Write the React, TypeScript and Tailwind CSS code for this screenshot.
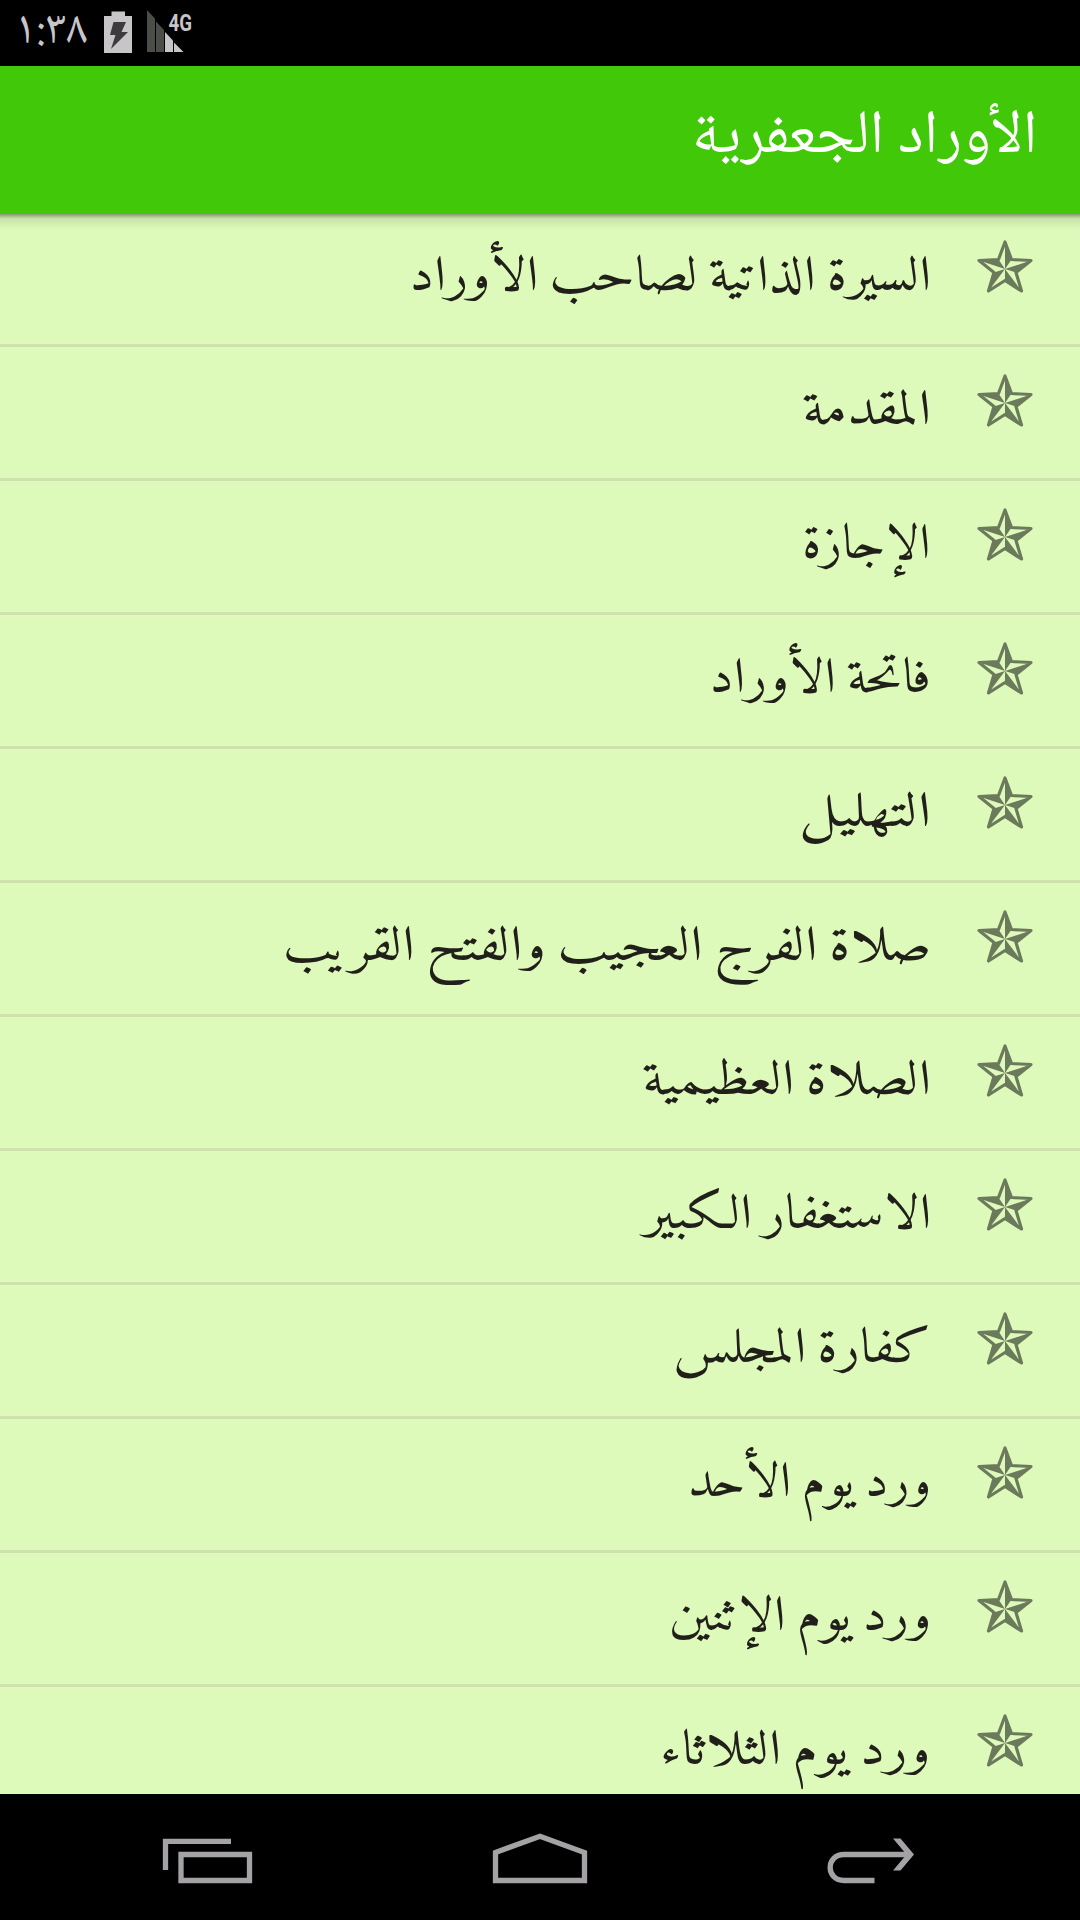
import { useLayoutEffect, useRef } from "react";

// \u200d keeps the letters joined without the stacked ligature
const items = [
  { title: "السيرة الذاتية لصاحب الأوراد", width: 522 },
  { title: "المقدمة", width: 129 },
  { title: "الإجازة", width: 129 },
  { title: "فاتحة الأوراد", width: 222 },
  { title: "الت\u200dهليل", width: 132 },
  { title: "صلاة الفرج العجيب والفتح القريب", width: 648 },
  { title: "الصلاة العظيمية", width: 289 },
  { title: "الاستغفار الكبير", width: 287 },
  { title: "كفارة الم\u200dجلس", width: 258 },
  { title: "ورد يوم الأحد", width: 243 },
  { title: "ورد يوم الإثنين", width: 262 },
  { title: "ورد يوم الثلاثاء", width: 271 },
];

interface FitTextProps {
  text: string;
  width: number;
  className: string;
}

// Squeezes or stretches a single line so that it fills the given width
function FitText({ text, width, className }: FitTextProps) {
  const ref = useRef<HTMLSpanElement>(null);

  useLayoutEffect(() => {
    const el = ref.current;
    if (el) el.style.transform = `scaleX(${width / el.offsetWidth})`;
  }, [width]);

  return (
    <span ref={ref} className={`inline-block shrink-0 whitespace-nowrap ${className}`}>
      {text}
    </span>
  );
}

function StarIcon() {
  return (
    <svg viewBox="0 0 56 54" className="w-14 h-[54px] shrink-0" fill="#6c7a5c">
      <path
        d="M28 2 L34.5 19.5 L54 20.5 L39 32.5 L44.5 51 L28 40.5 L11.5 51 L17 32.5 L2 20.5 L21.5 19.5 Z"
        fill="none"
        stroke="#6c7a5c"
        strokeWidth="3.2"
        strokeLinejoin="round"
      />
      <path d="M28 2 L34.5 19.5 L28 29 Z" />
      <path d="M54 20.5 L39 32.5 L28 29 Z" />
      <path d="M44.5 51 L28 40.5 L28 29 Z" />
      <path d="M11.5 51 L17 32.5 L28 29 Z" />
      <path d="M2 20.5 L21.5 19.5 L28 29 Z" />
    </svg>
  );
}

function StatusBar() {
  return (
    <div dir="ltr" className="h-[66px] shrink-0 bg-black flex items-start pl-[15px]">
      <div className="w-[85px] flex pt-[3px]">
        <FitText
          text="١:٣٨"
          width={73}
          className="origin-left text-[48px] leading-[60px] text-[#c9c6c9] font-['Noto_Naskh_Arabic','Amiri','DejaVu_Sans',sans-serif]"
        />
      </div>
      <svg viewBox="100 0 100 66" className="w-[100px] h-[66px]">
        <path d="M111.500 11.500H125V16H132V53H104V16H111.500Z" fill="#c8c5c8" />
        <path d="M113.500 22H126L121.500 32H128L111 49L115.500 35H110Z" fill="#3c3c3c" />
        <path d="M147 10L155 18.500V52H147Z" fill="#4b4d49" />
        <path d="M156 21.500L164 30V52H156Z" fill="#4b4d49" />
        <path d="M165 32L173 40.500V52H165Z" fill="#c8c5c8" />
        <path d="M174 42.500L183.500 52H174Z" fill="#c8c5c8" />
        <text x="168.500" y="31" fontSize="24" fontWeight="700" fontFamily="Roboto, sans-serif" fill="#c8c5c8" textLength="23.500" lengthAdjust="spacingAndGlyphs">
          4G
        </text>
      </svg>
    </div>
  );
}

function NavBar() {
  return (
    <nav dir="ltr" className="h-[126px] shrink-0 bg-black flex justify-between px-[140px]">
      <svg viewBox="0 0 140 126" className="w-[140px] h-[126px]" fill="none" stroke="#a5a2a5" strokeWidth="5.300">
        <path d="M25.500 76V47.300H91" />
        <path d="M41 60.500H109.500V86.500H41Z" />
      </svg>
      <svg viewBox="0 0 140 126" className="w-[140px] h-[126px]" fill="none" stroke="#a5a2a5" strokeWidth="5.300">
        <path d="M25.500 58.500L70 42.200L114.500 58.500V86.500H25.500Z" />
      </svg>
      <svg viewBox="0 0 140 126" className="w-[140px] h-[126px]" fill="none" stroke="#a5a2a5" strokeWidth="5.300">
        <path d="M74.500 86.500H44C25.500 86.500 25.500 60.500 44 60.500H110" />
        <path d="M93 44.500H100.500L114 60.500L100.500 76.500H93L106.500 60.500Z" fill="#a5a2a5" stroke="none" />
      </svg>
    </nav>
  );
}

export default function App() {
  return (
    <div dir="rtl" className="w-[1080px] h-[1920px] overflow-hidden flex flex-col bg-[#defabb]">
      <StatusBar />
      <header className="relative z-10 h-[147px] shrink-0 bg-[#41c808] flex items-center pr-[42px]">
        <FitText
          text="الأوراد الجعفرية"
          width={346}
          className="origin-right text-[61px] leading-none text-white font-['Noto_Naskh_Arabic','Amiri','DejaVu_Sans',sans-serif]"
        />
        <div className="absolute inset-x-0 top-full h-4 bg-linear-to-b from-black/45 via-black/10 via-35% to-transparent" />
      </header>
      <main className="flex-1 min-h-0 overflow-hidden">
        {items.map((item) => (
          <div key={item.title} className="h-[134px] border-b-[3px] border-[#cee1ae] flex items-start pr-[47px] pt-[27px]">
            <StarIcon />
            <div className="pr-[46px] pt-1 flex">
              <FitText
                text={item.title}
                width={item.width}
                className="origin-right text-[49px] leading-[68px] [word-spacing:-0.1em] text-[#211f1a] font-['Amiri','Scheherazade_New','Noto_Naskh_Arabic','DejaVu_Sans',serif]"
              />
            </div>
          </div>
        ))}
      </main>
      <NavBar />
    </div>
  );
}
